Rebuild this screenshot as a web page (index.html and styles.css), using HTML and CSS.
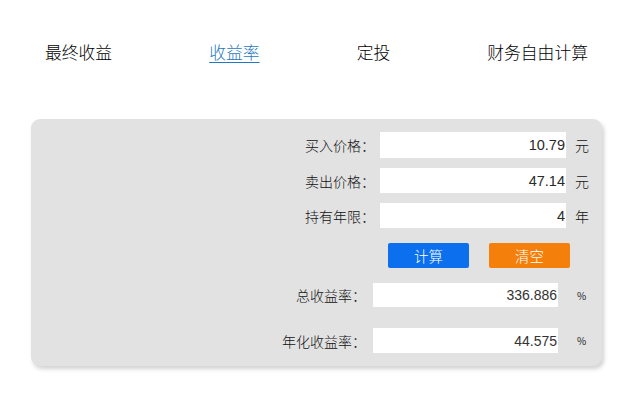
FILE: index.html
```html
<!DOCTYPE html>
<html lang="zh">
<head>
<meta charset="utf-8">
<title>收益率</title>
<link rel="stylesheet" href="styles.css">
</head>
<body>
<nav class="tabs">
  <a class="tab">最终收益</a>
  <a class="tab active">收益率</a>
  <a class="tab">定投</a>
  <a class="tab">财务自由计算</a>
</nav>
<section class="card">
  <div class="row r1">
    <label class="label">买入价格：</label>
    <input class="field" type="text" value="10.79">
    <span class="unit">元</span>
  </div>
  <div class="row">
    <label class="label">卖出价格：</label>
    <input class="field" type="text" value="47.14">
    <span class="unit">元</span>
  </div>
  <div class="row">
    <label class="label">持有年限：</label>
    <input class="field" type="text" value="4">
    <span class="unit">年</span>
  </div>
  <div class="row buttons">
    <button class="btn btn-calc">计算</button>
    <button class="btn btn-clear">清空</button>
  </div>
  <div class="row result first">
    <label class="label">总收益率：</label>
    <input class="field" type="text" value="336.886">
    <span class="unit pct">%</span>
  </div>
  <div class="row result second">
    <label class="label">年化收益率：</label>
    <input class="field" type="text" value="44.575">
    <span class="unit pct">%</span>
  </div>
</section>
</body>
</html>
```

FILE: styles.css
```css
html, body {
  margin: 0;
  padding: 0;
  background: #ffffff;
}
body {
  font-family: "Noto Sans CJK SC", "Noto Sans", sans-serif;
  font-weight: 300;
  color: #000;
  width: 620px;
  height: 395px;
  overflow: hidden;
}
.tabs {
  display: flex;
  justify-content: space-between;
  margin: 40px 0 0 45px;
  width: 543px;
  height: 24px;
  align-items: center;
}
.tab {
  font-size: 16.8px;
  line-height: 24px;
  color: #000;
  text-decoration: none;
}
.tab.active {
  color: #1f78c1;
  text-decoration: underline;
  text-underline-offset: 3px;
}
.card {
  margin: 55px 0 0 31px;
  width: 571px;
  box-sizing: border-box;
  background: #e2e2e2;
  border-radius: 9px;
  box-shadow: 2px 3px 4px rgba(0, 0, 0, 0.18);
  padding: 13px 0 13px 0;
  display: flex;
  flex-direction: column;
}
.row {
  display: flex;
  justify-content: flex-end;
  align-items: center;
  padding-right: 13px;
  height: 25px;
  margin-bottom: 10px;
}
.row.r1 {
  height: 26px;
}
.label {
  font-size: 14px;
  color: #111;
  margin-right: 5px;
  white-space: nowrap;
}
.field {
  width: 186px;
  height: 100%;
  box-sizing: border-box;
  border: none;
  background: #fff;
  padding: 0 1px 0 0;
  margin: 0;
  text-align: right;
  font-family: "Liberation Sans", Arial, sans-serif;
  font-size: 14.5px;
  color: #2a2a2a;
  outline: none;
}
.unit {
  font-size: 14px;
  color: #111;
  margin-left: 9px;
  width: 14px;
}
.buttons {
  margin-top: 5px;
  height: 25px;
  padding-right: 32px;
  gap: 20px;
  margin-bottom: 15px;
}
.btn {
  width: 81px;
  height: 25px;
  border: none;
  border-radius: 2px;
  color: #fff;
  font-family: "Noto Sans CJK SC", sans-serif;
  font-weight: 300;
  font-size: 14.5px;
  padding: 0;
  line-height: 25px;
}
.btn-calc {
  background: #0c70ee;
}
.btn-clear {
  background: #f47f0b;
}
.result {
  height: 24px;
  padding-right: 17px;
}
.result.second {
  height: 25px;
}
.result .field {
  width: 185px;
  font-size: 14px;
  color: #333;
}
.result .label {
  margin-right: 7px;
}
.result.first {
  margin-bottom: 21px;
}
.result.second {
  margin-bottom: 0;
}
.pct {
  font-size: 10px;
  font-weight: 400;
  color: #222;
  width: 8px;
  margin-left: 19px;
}
```
